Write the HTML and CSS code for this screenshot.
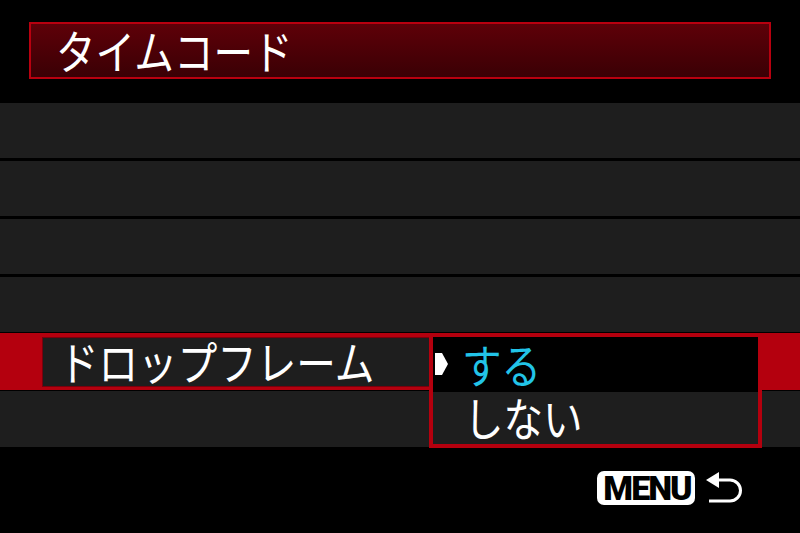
FILE: index.html
```html
<!DOCTYPE html>
<html lang="ja">
<head>
<meta charset="utf-8">
<title>タイムコード</title>
<link rel="stylesheet" href="styles.css">
</head>
<body>
<div class="screen">
  <header class="header">
    <div class="title-box"><span class="jp title">タイムコード</span></div>
  </header>
  <div class="rows">
    <div class="row"></div>
    <div class="row"></div>
    <div class="row"></div>
    <div class="row row-last"></div>
    <div class="row row-active">
      <div class="label-box"><span class="jp label">ドロップフレーム</span></div>
      <div class="dropdown">
        <div class="option option-selected">
          <svg class="cursor" width="13" height="22" viewBox="0 0 13 22"><polygon points="0,0 7,0 13,11 7,22 0,22" fill="#fff"/></svg>
          <span class="jp option-text">する</span>
        </div>
        <div class="option">
          <span class="cursor-space"></span>
          <span class="jp option-text">しない</span>
        </div>
      </div>
    </div>
    <div class="row row-bottom"></div>
  </div>
  <footer class="footer">
    <span class="menu-badge"><span class="menu-text">MENU</span></span>
    <svg class="return" width="36" height="32" viewBox="0 0 36 32">
      <polygon points="0,8 13,0 13,16" fill="#fff"/>
      <path d="M12 8 H24 A10.5 10.5 0 0 1 24 29 H3" fill="none" stroke="#fff" stroke-width="3"/>
    </svg>
  </footer>
</div>
</body>
</html>
```

FILE: styles.css
```css
html, body {
  margin: 0;
  padding: 0;
  background: #000;
}
.screen {
  width: 800px;
  height: 533px;
  background: #000;
  overflow: hidden;
  font-family: "Noto Sans CJK JP", "Noto Sans", sans-serif;
  color: #fff;
}
.jp {
  display: inline-block;
  font-size: 46px;
  line-height: 1;
  white-space: nowrap;
  margin-top: -4px;
  transform: scaleX(0.86);
  transform-origin: left center;
}
.header {
  padding: 22px 29px 0 29px;
  height: 103px;
  box-sizing: border-box;
}
.title-box {
  height: 57px;
  box-sizing: border-box;
  border: 2px solid #b8000f;
  background: linear-gradient(#5e0008, #3a0005);
  display: flex;
  align-items: center;
  padding-left: 25px;
}
.rows {
  display: flex;
  flex-direction: column;
}
.row {
  height: 55px;
  background: #1e1e1e;
  margin-bottom: 3px;
}
.row-last {
  margin-bottom: 1px;
}
.row-active {
  position: relative;
  height: 57px;
  background: #b4000e;
  margin-bottom: 1px;
  padding-top: 4px;
  box-sizing: border-box;
}
.label-box {
  margin-left: 42px;
  width: 387px;
  height: 50px;
  box-sizing: border-box;
  background: #1e1e1e;
  border: 1px solid #7a000c;
  border-right: none;
  display: flex;
  align-items: center;
  padding-left: 16px;
}
.row-bottom {
  height: 56px;
  margin-bottom: 0;
}
.dropdown {
  position: absolute;
  left: 429px;
  top: 0;
  width: 333px;
  height: 115px;
  box-sizing: border-box;
  border: 4px solid #b4000e;
  display: flex;
  flex-direction: column;
  z-index: 2;
}
.option {
  display: flex;
  align-items: center;
  padding-left: 2px;
  background: #1e1e1e;
  flex: 1;
}
.option-selected {
  background: #000;
  height: 55px;
  flex: none;
}
.cursor {
  display: block;
  margin-right: 14px;
  margin-top: -2px;
}
.cursor-space {
  width: 29px;
  flex: none;
}
.option-selected .option-text {
  color: #22c4e8;
}
.footer {
  display: flex;
  justify-content: flex-end;
  align-items: center;
  padding: 24px 58px 0 0;
  gap: 11px;
}
.menu-badge {
  width: 98px;
  height: 34px;
  box-sizing: border-box;
  background: #fff;
  border-radius: 7px;
  display: flex;
  align-items: center;
  justify-content: center;
}
.menu-text {
  font-family: "Roboto", "Liberation Sans", sans-serif;
  font-weight: 900;
  font-size: 34px;
  line-height: 1;
  color: #000;
  letter-spacing: -2px;
  margin-right: -2px;
}
.return {
  display: block;
}
```
